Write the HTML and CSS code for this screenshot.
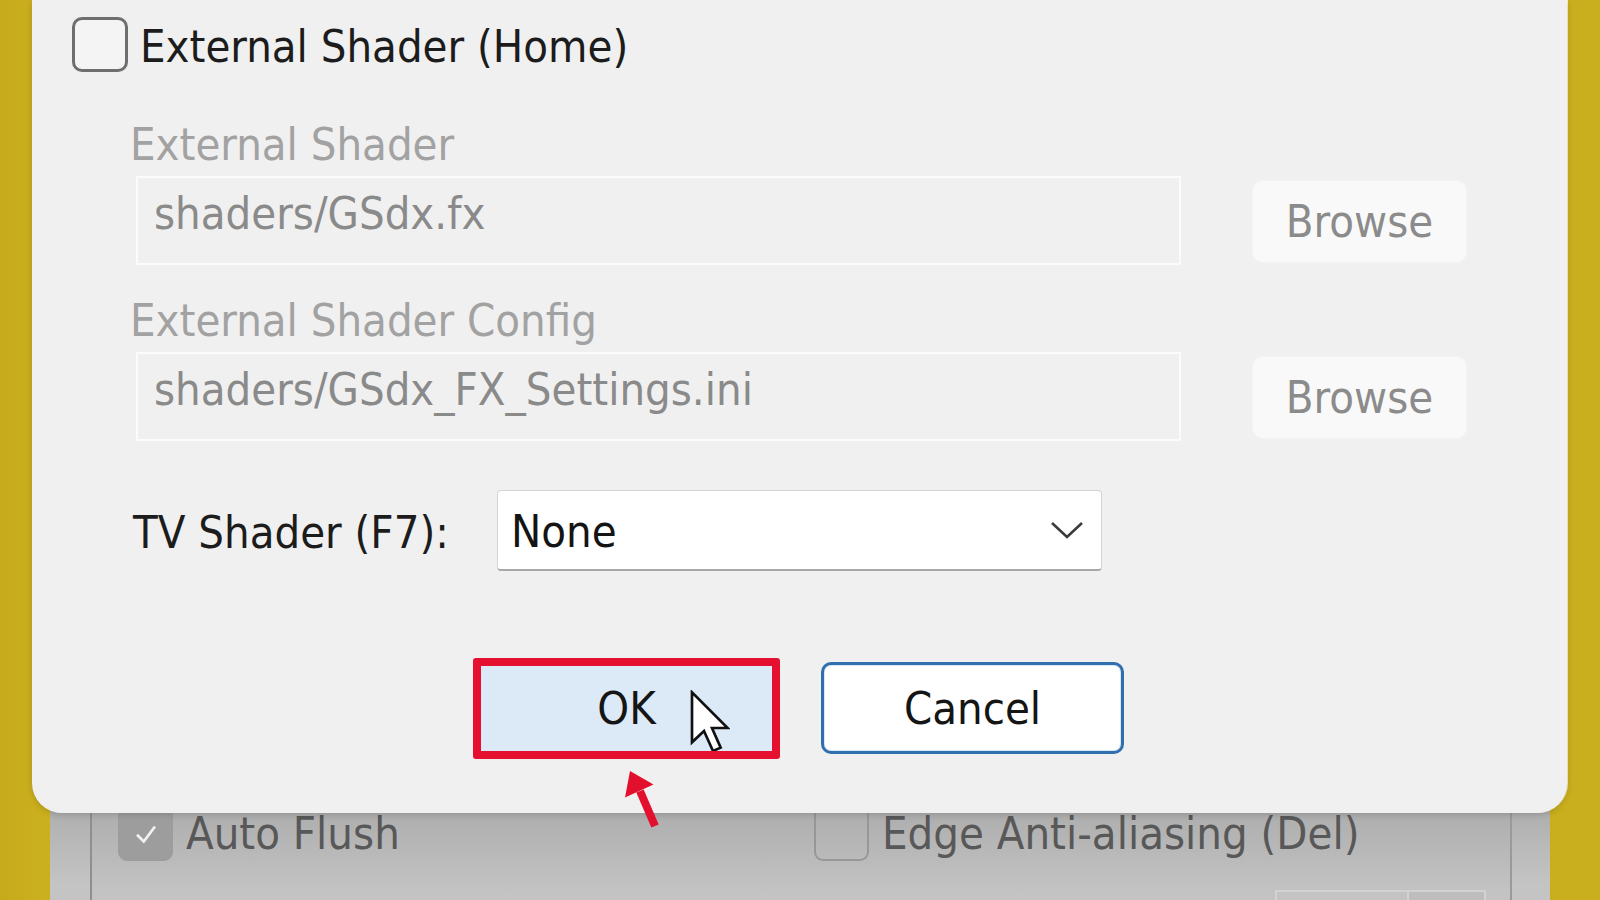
FILE: index.html
```html
<!DOCTYPE html>
<html lang="en">

<head>
  <meta charset="UTF-8">
  <title>Shader Configuration</title>
  <link rel="stylesheet" href="styles.css">
</head>

<body>
  <div class="desktop">

    <!-- settings window behind the dialog -->
    <div class="bg-window">
      <div class="group-box">
        <div class="bg-option">
          <span class="bg-check checked">
            <svg viewBox="0 0 20 20" width="30" height="30"><path d="M4 10.5 L8.5 15 L16 5" fill="none" stroke="#f2f2f2" stroke-width="1.8" /></svg>
          </span>
          <span class="bg-label">Auto Flush</span>
        </div>
        <div class="bg-option">
          <span class="bg-check"></span>
          <span class="bg-label">Edge Anti-aliasing (Del)</span>
        </div>
        <div class="bg-combo"><span></span></div>
      </div>
    </div>

    <div class="dialog">
      <label class="home-row">
        <span class="checkbox"></span>
        <span class="home-label">External Shader (Home)</span>
      </label>

      <div class="shader-group">
        <div class="field-label">External Shader</div>
        <div class="field-row">
          <div class="path-input">shaders/GSdx.fx</div>
          <button class="browse">Browse</button>
        </div>

        <div class="field-label second">External Shader Config</div>
        <div class="field-row">
          <div class="path-input">shaders/GSdx_FX_Settings.ini</div>
          <button class="browse">Browse</button>
        </div>
      </div>

      <div class="tv-row">
        <span class="tv-label">TV Shader (F7):</span>
        <div class="select">
          <span>None</span>
          <svg class="chevron" viewBox="0 0 34 20" width="34" height="20"><path d="M2 3 L17 17 L32 3" fill="none" stroke="#3c3c3c" stroke-width="2.6" /></svg>
        </div>
      </div>

      <div class="button-row">
        <div class="ok-wrap">
          <button class="btn ok">OK</button>
          <svg class="cursor" viewBox="0 0 12 19" width="40" height="64"><path d="M0.6 0.6 L0.6 15.6 L4.2 12.2 L6.9 18.2 L9.2 17.2 L6.6 11.3 L11.3 11.3 Z" fill="#ffffff" stroke="#111111" stroke-width="0.8" stroke-linejoin="miter" /></svg>
          <span class="highlight"></span>
          <svg class="arrow" viewBox="0 0 40 60" width="40" height="60"><line x1="35" y1="57" x2="20" y2="22" stroke="#e3102d" stroke-width="8" /><polygon points="10,2 33.5,15.5 5,28.5" fill="#e3102d" /></svg>
        </div>
        <button class="btn cancel">Cancel</button>
      </div>
    </div>

  </div>
</body>

</html>
```

FILE: styles.css
```css
body {
  margin: 0;
  overflow: hidden;
  font-family: "DejaVu Sans Condensed", "Liberation Sans", sans-serif;
  font-size: 45px;
  line-height: 52px;
  background: linear-gradient(to right, #c6aa1c 0%, #cdb21f 4%, #c3a81c 50%, #c9ae1e 100%);
}

.desktop {
  position: relative;
  height: 900px;
  overflow: hidden;
}

/* ---------- background window ---------- */

.bg-window {
  position: absolute;
  left: 50px;
  top: 740px;
  width: 1500px;
  height: 160px;
  background: linear-gradient(to bottom, #a6a6a6 30%, #b4b4b4 55%, #c4c4c4 90%);
}

.group-box {
  position: relative;
  margin-left: 40px;
  width: 1422px;
  height: 160px;
  box-sizing: border-box;
  border-left: 2px solid #8f8f8f;
  border-right: 2px solid #9a9a9a;
  background: linear-gradient(to bottom, #a8a8a8 30%, #b2b2b2 55%, #c3c3c3 95%);
  display: flex;
  padding-top: 66px;
  padding-left: 26px;
}

.bg-option {
  display: flex;
  align-items: center;
  gap: 13px;
  width: 700px;
  height: 55px;
}

.bg-check {
  width: 55px;
  height: 55px;
  box-sizing: border-box;
  border: 2px solid #979797;
  border-radius: 9px;
  display: flex;
  align-items: center;
  justify-content: center;
}

.bg-check.checked {
  background: #9d9d9d;
  border-color: #9d9d9d;
}

.bg-label {
  color: #585858;
}

.bg-combo {
  position: absolute;
  left: 1183px;
  top: 150px;
  width: 207px;
  height: 10px;
  border: 2px solid #d2d2d2;
  border-bottom: none;
}

.bg-combo span {
  display: block;
  margin-left: 130px;
  height: 100%;
  border-left: 2px solid #d2d2d2;
  background: #bdbdbd;
}

/* ---------- dialog ---------- */

.dialog {
  position: relative;
  z-index: 1;
  margin-left: 32px;
  width: 1535px;
  height: 813px;
  box-sizing: border-box;
  padding: 17px 40px 0 40px;
  background: #f0f0f0;
  border-radius: 0 0 30px 30px;
  box-shadow: 0 2px 6px rgba(0, 0, 0, 0.15), 1px 0 0 #f7edc4;
}

.home-row {
  display: flex;
  align-items: center;
  gap: 12px;
  height: 55px;
  color: #1c1c1c;
}

.checkbox {
  width: 56px;
  height: 55px;
  box-sizing: border-box;
  border: 3px solid #6e6e6e;
  border-radius: 10px;
  background: #f4f4f4;
}

.home-label {
  margin-top: 4px;
}

.shader-group {
  padding-left: 58px;
  margin-top: 47px;
}

.field-label {
  color: #a2a2a2;
}

.field-label.second {
  margin-top: 30px;
}

.field-row {
  display: flex;
  align-items: flex-start;
  gap: 71px;
  margin-top: 5px;
  margin-left: 6px;
}

.path-input {
  width: 1045px;
  flex-shrink: 0;
  height: 89px;
  box-sizing: border-box;
  border: 2px solid #fbfbfb;
  padding: 10px 16px;
  color: #8a8a8a;
}

.browse {
  margin-top: 4px;
  width: 215px;
  flex-shrink: 0;
  height: 83px;
  border: 1px solid #f4f4f4;
  border-radius: 11px;
  background: #f9f9f9;
  font-family: inherit;
  font-size: 45px;
  color: #8b8b8b;
  padding: 0;
}

.tv-row {
  display: flex;
  align-items: center;
  margin-top: 49px;
  padding-left: 61px;
  height: 81px;
  color: #1c1c1c;
}

.tv-label {
  width: 364px;
  flex-shrink: 0;
  margin-top: 4px;
}

.select {
  width: 605px;
  height: 81px;
  box-sizing: border-box;
  display: flex;
  align-items: center;
  justify-content: space-between;
  padding: 3px 17px 0 13px;
  background: #ffffff;
  border: 1px solid #d4d4d4;
  border-bottom: 2px solid #a8a8a8;
  border-radius: 4px;
  color: #141414;
}

.chevron {
  margin-top: -4px;
}

/* ---------- OK / Cancel ---------- */

.button-row {
  display: flex;
  justify-content: center;
  gap: 43px;
  margin-top: 91px;
}

.btn {
  width: 303px;
  height: 92px;
  border-radius: 10px;
  font-family: inherit;
  font-size: 45px;
  color: #151515;
  padding: 0;
}

.ok {
  background: #dce9f7;
  border: 2px solid #8fb1d3;
}

.cancel {
  background: #ffffff;
  border: 3px solid #2f6fae;
  box-shadow: inset 0 0 0 1px #d9e8f5;
}

.ok-wrap {
  position: relative;
}

.cursor {
  position: absolute;
  left: 215px;
  top: 28px;
}

.highlight {
  position: absolute;
  left: -2px;
  top: -4px;
  width: 307px;
  height: 101px;
  box-sizing: border-box;
  border: 8px solid #e5102f;
  border-radius: 3px;
}

.arrow {
  position: absolute;
  left: 145px;
  top: 107px;
}
```
